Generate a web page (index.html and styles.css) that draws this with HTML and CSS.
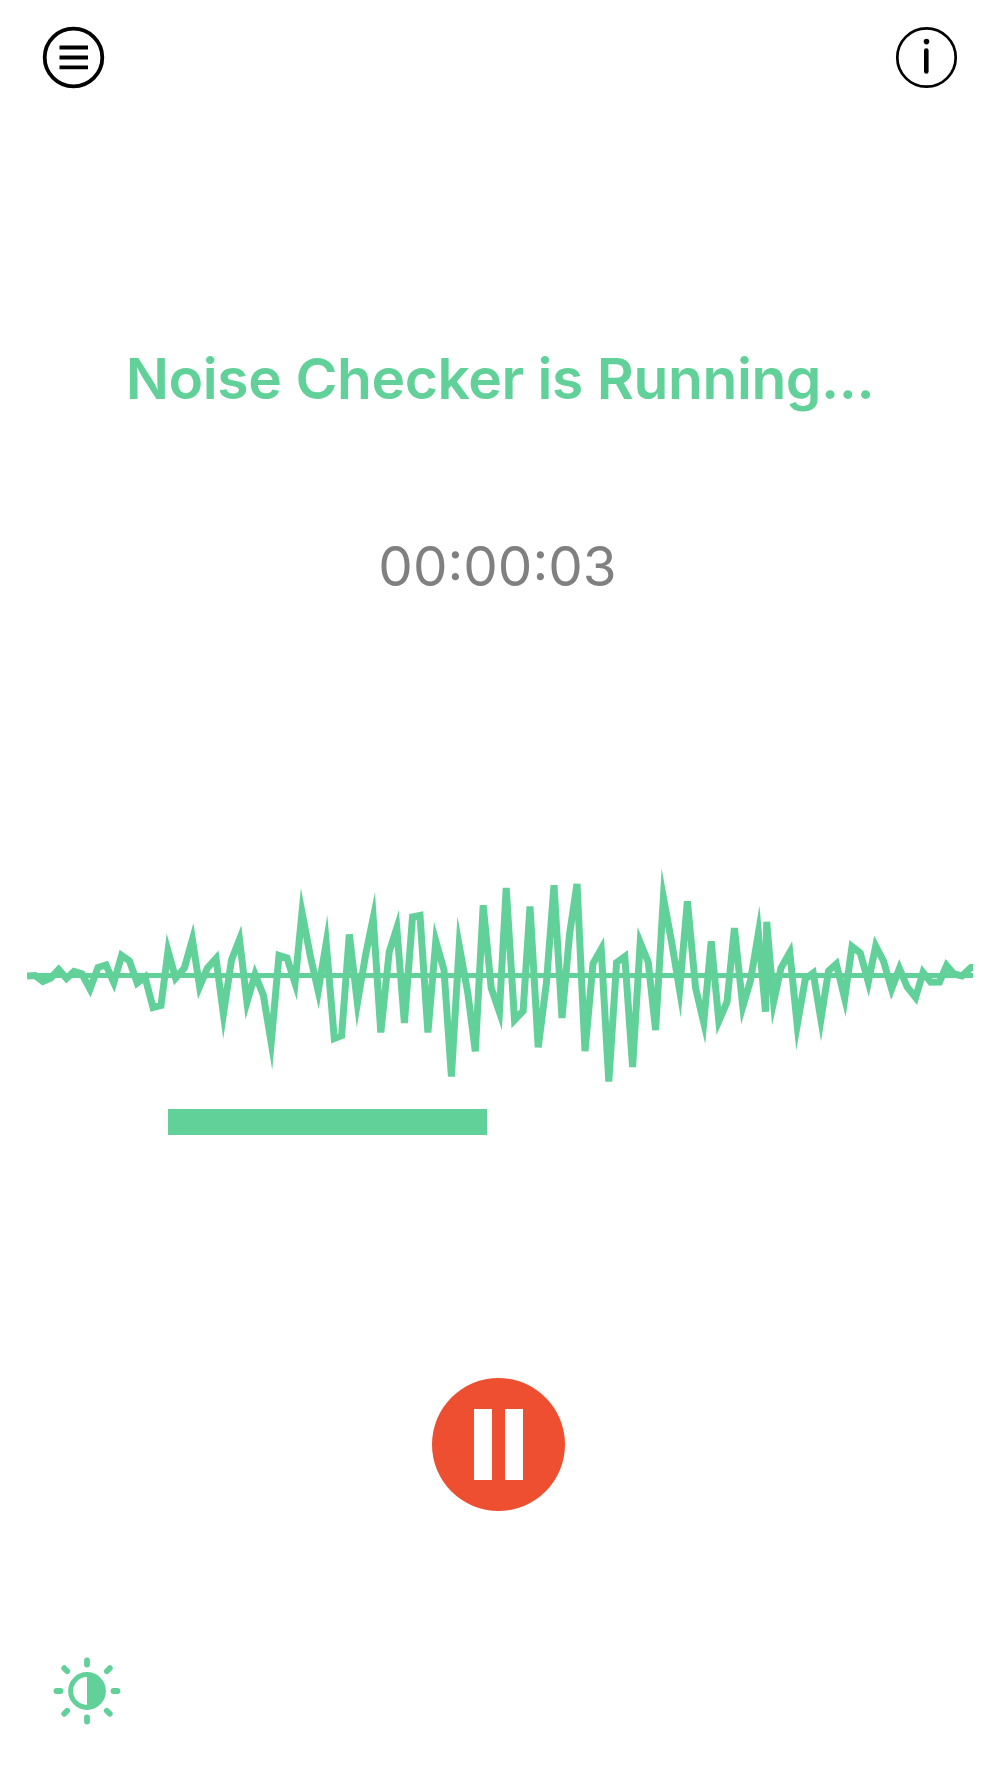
FILE: index.html
```html
<!DOCTYPE html>
<html lang="en">
<head>
  <meta charset="UTF-8">
  <meta name="viewport" content="width=device-width, initial-scale=1.0">
  <title>Noise Checker</title>
  <link rel="stylesheet" href="styles.css">
</head>
<body>
  <div class="header">
    <button class="icon-btn" aria-label="Menu">
      <svg width="64" height="64" viewBox="0 0 64 64">
        <circle cx="32.5" cy="31.5" r="28.8" fill="none" stroke="#000" stroke-width="3.8"/>
        <path d="M18.5 21.5h28.5M18.5 31.5h28.5M18.5 41.3h28.5" stroke="#000" stroke-width="3.8"/>
      </svg>
    </button>
    <button class="icon-btn" aria-label="Info">
      <svg width="64" height="64" viewBox="0 0 64 64">
        <circle cx="32.5" cy="31.5" r="29.2" fill="none" stroke="#000" stroke-width="2.7"/>
        <circle cx="32.5" cy="15.6" r="2.8"/>
        <path d="M32.3 24.6v20.8" stroke="#000" stroke-width="4.6" stroke-linecap="round"/>
      </svg>
    </button>
  </div>
  <div class="container">
    <h1 class="title">Noise Checker is Running...</h1>
    <div class="timer" id="timer">00:00:03</div>
    <svg class="wave" width="946" height="230" viewBox="27 860 946 230">
      <path class="wave-axis" d="M27 975.6H973"/>
      <polyline class="wave-line" points="
        27,976 35,975.5 42.9,981.5 50.8,978 58.7,969.5 66.5,978.5 74,971.5 82,974 90,989 98,967.5
        106,965 113.8,982.5 121.6,955.5 129.5,961 137.2,983 145,977 153,1007.5 161,1005.5 168,951 175.6,978
        184.4,968 192.4,939.5 199.6,986.5 207.5,968 216,958.5 223.4,1014 231.5,960 239.5,939.5 247,1002 255,974.5
        263.3,995 271.2,1042.5 279,955.5 287,958 295,983 302,912.5 310.5,957 318.2,991 326.2,943 334.3,1038.5
        341.6,1035.5 349.3,934.5 357.4,1003 365.6,955 373.2,918 380.8,1032.5 389.2,952 396.8,928 404.4,1023 412.5,917
        420,915.5 427.9,1032.5 435.8,941 444,970 451.4,1076.5 459.2,945.5 467.8,993 475.3,1051.3 483.2,905.3 491.2,988
        499.4,1012 506.2,888 514.5,1020 523.1,1011 530,906.5 538.2,1047.3 546.4,983 554,885.3 562,1018 569.6,934
        577,884 585,1051.2 593,963.5 601.2,949 608.8,1081.5 616.6,962.5 624.8,956.5 632.6,1067 640.2,942.5 648.2,962
        655.6,1030 663.4,897.5 671.8,943 679.6,990 687.4,901.3 695.6,988 703.7,1022.5 711.2,941.3 718.8,1021 727,1002
        734.4,928 742.8,1006.5 750.6,980 758.4,933 765.5,1011.8 766.7,921.8 773.6,1002 781,968 789.8,952.5 797.2,1025
        805.3,979 813.2,973 820.9,1019.5 828.5,971 836.3,964 844.7,998.5 852,946.5 860.3,953 868.3,982 875.7,946
        883.5,961 891.6,989 899.4,968.5 907.2,987 915.6,997.5 923,972.5 930.8,982.3 939.5,982 946.6,965.5 954,974
        962,976 971,967.5 976,967.5"/>
    </svg>
    <div class="level">
      <div class="level-bar" id="level" style="width:318.5px;"></div>
    </div>
    <button class="pause-btn" aria-label="Pause">
      <span class="pause-line"></span>
      <span class="pause-line"></span>
    </button>
  </div>
  <div class="footer">
    <button class="icon-btn" aria-label="Brightness">
      <svg width="68" height="68" viewBox="-34 -34 68 68">
        <circle r="16.4" fill="none" stroke="#61d199" stroke-width="5"/>
        <path d="M0 -16a16 16 0 0 1 0 32z" fill="#61d199"/>
        <path d="M0 -30.5V-26.5M0 30.5V26.5M-30.5 0H-26.5M30.5 0H26.5M-22.8 -22.8L-19.8 -19.8M22.8 -22.8L19.8 -19.8M-22.8 22.8L-19.8 19.8M22.8 22.8L19.8 19.8" stroke="#61d199" stroke-width="5.8" stroke-linecap="round"/>
      </svg>
    </button>
  </div>
</body>
</html>
```

FILE: styles.css
```css
* {
  box-sizing: border-box;
}
body {
  min-height: 1778px;
  margin: 0;
  font-family: Inter, 'Liberation Sans', Arial, sans-serif;
  background: #fff;
  display: flex;
  flex-direction: column;
}
button {
  border: none;
  padding: 0;
  background: none;
  cursor: pointer;
}
svg {
  display: block;
}
.header {
  display: flex;
  justify-content: space-between;
  padding: 26px 42px 0 41px;
}
.container {
  display: flex;
  flex-direction: column;
  align-items: center;
}
.title {
  height: 70px;
  margin: 254px 0 0;
  line-height: 70px;
  font-size: 57px;
  font-weight: 600;
  letter-spacing: -0.44px;
  white-space: nowrap;
  color: #61d199;
}
.timer {
  height: 66px;
  margin: 119px 5px 0 0;
  line-height: 66px;
  font-size: 54.8px;
  color: #808080;
}
.wave {
  margin-top: 261px;
}
.wave-axis {
  fill: none;
  stroke: #61d199;
  stroke-width: 5;
}
.wave-line {
  fill: none;
  stroke: #61d199;
  stroke-width: 7;
  stroke-linejoin: miter;
  stroke-miterlimit: 9.4;
}
.level {
  width: 664px;
  margin-top: 19px;
}
.level-bar {
  height: 26px;
  background: #61d199;
}
.pause-btn {
  display: flex;
  justify-content: center;
  align-items: center;
  gap: 13.4px;
  width: 133px;
  height: 133px;
  margin: 243px 2.6px 0 0;
  border-radius: 50%;
  background: #ed4f30;
}
.pause-line {
  width: 17.8px;
  height: 71.3px;
  background: #fff;
}
.footer {
  margin-top: auto;
  padding: 0 0 52.7px 52.8px;
}
.footer .icon-btn {
  display: block;
}
```
